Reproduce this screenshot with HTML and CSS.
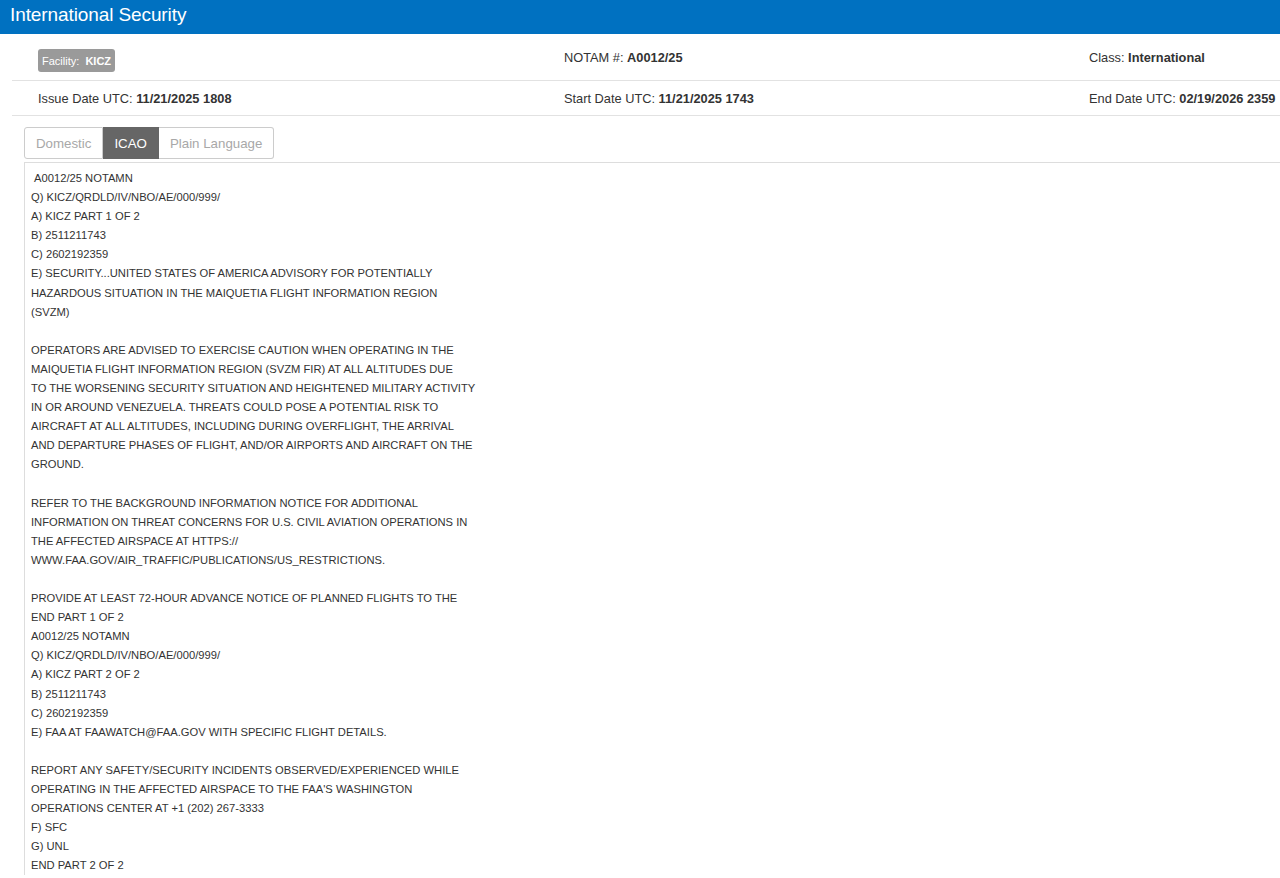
FILE: index.html
```html
<!DOCTYPE html>
<html>
<head>
<meta charset="utf-8">
<link rel="stylesheet" href="styles.css">
</head>
<body>
<header class="topbar"><h1 class="title">International Security</h1></header>
<section class="info">
  <div class="row row-first">
    <div class="cell"><span class="badge">Facility:&nbsp; <b>KICZ</b></span></div>
    <div class="cell">NOTAM #: <b>A0012/25</b></div>
    <div class="cell">Class: <b>International</b></div>
  </div>
  <div class="row row-second">
    <div class="cell">Issue Date UTC: <b>11/21/2025 1808</b></div>
    <div class="cell">Start Date UTC: <b>11/21/2025 1743</b></div>
    <div class="cell">End Date UTC: <b>02/19/2026 2359</b></div>
  </div>
</section>
<nav class="tabs">
  <span class="tab">Domestic</span><span class="tab active">ICAO</span><span class="tab">Plain Language</span>
</nav>
<div class="notam"><div class="line">&nbsp;A0012/25 NOTAMN</div>
<div class="line">Q) KICZ/QRDLD/IV/NBO/AE/000/999/</div>
<div class="line">A) KICZ PART 1 OF 2</div>
<div class="line">B) 2511211743</div>
<div class="line">C) 2602192359</div>
<div class="line">E) SECURITY...UNITED STATES OF AMERICA ADVISORY FOR POTENTIALLY</div>
<div class="line">HAZARDOUS SITUATION IN THE MAIQUETIA FLIGHT INFORMATION REGION</div>
<div class="line">(SVZM)</div>
<div class="line">&nbsp;</div>
<div class="line">OPERATORS ARE ADVISED TO EXERCISE CAUTION WHEN OPERATING IN THE</div>
<div class="line">MAIQUETIA FLIGHT INFORMATION REGION (SVZM FIR) AT ALL ALTITUDES DUE</div>
<div class="line">TO THE WORSENING SECURITY SITUATION AND HEIGHTENED MILITARY ACTIVITY</div>
<div class="line">IN OR AROUND VENEZUELA. THREATS COULD POSE A POTENTIAL RISK TO</div>
<div class="line">AIRCRAFT AT ALL ALTITUDES, INCLUDING DURING OVERFLIGHT, THE ARRIVAL</div>
<div class="line">AND DEPARTURE PHASES OF FLIGHT, AND/OR AIRPORTS AND AIRCRAFT ON THE</div>
<div class="line">GROUND.</div>
<div class="line">&nbsp;</div>
<div class="line">REFER TO THE BACKGROUND INFORMATION NOTICE FOR ADDITIONAL</div>
<div class="line">INFORMATION ON THREAT CONCERNS FOR U.S. CIVIL AVIATION OPERATIONS IN</div>
<div class="line">THE AFFECTED AIRSPACE AT HTTPS://</div>
<div class="line">WWW.FAA.GOV/AIR_TRAFFIC/PUBLICATIONS/US_RESTRICTIONS.</div>
<div class="line">&nbsp;</div>
<div class="line">PROVIDE AT LEAST 72-HOUR ADVANCE NOTICE OF PLANNED FLIGHTS TO THE</div>
<div class="line">END PART 1 OF 2</div>
<div class="line">A0012/25 NOTAMN</div>
<div class="line">Q) KICZ/QRDLD/IV/NBO/AE/000/999/</div>
<div class="line">A) KICZ PART 2 OF 2</div>
<div class="line">B) 2511211743</div>
<div class="line">C) 2602192359</div>
<div class="line">E) FAA AT FAAWATCH@FAA.GOV WITH SPECIFIC FLIGHT DETAILS.</div>
<div class="line">&nbsp;</div>
<div class="line">REPORT ANY SAFETY/SECURITY INCIDENTS OBSERVED/EXPERIENCED WHILE</div>
<div class="line">OPERATING IN THE AFFECTED AIRSPACE TO THE FAA'S WASHINGTON</div>
<div class="line">OPERATIONS CENTER AT +1 (202) 267-3333</div>
<div class="line">F) SFC</div>
<div class="line">G) UNL</div>
<div class="line">END PART 2 OF 2</div>
</div>
</body>
</html>
```
FILE: styles.css
```css
html, body {
  margin: 0;
  padding: 0;
  background: #fff;
  font-family: "Liberation Sans", Arial, sans-serif;
  color: #333;
  overflow: hidden;
}
.topbar {
  background: #0071c1;
  height: 34px;
  box-sizing: border-box;
  padding: 4px 0 0 10px;
}
.title {
  margin: 0;
  font-size: 19px;
  line-height: 22px;
  font-weight: normal;
  color: #fff;
  letter-spacing: -0.1px;
}
.info {
  margin-left: 12px;
}
.row {
  display: grid;
  grid-template-columns: 526px 525px 1fr;
  padding-left: 26px;
  border-bottom: 1px solid #e2e2e2;
  align-items: center;
  font-size: 12.8px;
  white-space: nowrap;
}
.row-first { height: 47px; padding-top: 1px; box-sizing: border-box; }
.row-second { height: 34px; }
.cell b { font-weight: bold; color: #333; }
.badge {
  display: inline-block;
  background: #9a9a9a;
  color: #fff;
  font-size: 11px;
  border-radius: 3px;
  padding: 6px 4px 5px 4px;
  line-height: 12px;
  margin-top: 6px;
}
.badge b { color: #fff; }
.tabs {
  display: flex;
  margin: 11px 0 0 24px;
}
.tab {
  border: 1px solid #ccc;
  border-left: none;
  padding: 0 11px;
  height: 30px;
  line-height: 31px;
  font-size: 13.3px;
  color: #a8a8a8;
}
.tab:first-child {
  border-left: 1px solid #ccc;
  border-radius: 3px 0 0 3px;
}
.tab:last-child { border-radius: 0 3px 3px 0; }
.tab.active {
  background: #666;
  color: #fff;
  border-color: #666;
}
.notam {
  margin: 3px 0 0 24px;
  border-top: 1px solid #ddd;
  border-left: 1px solid #ddd;
  padding: 6px 0 0 6px;
  font-size: 11.2px;
  line-height: 19.1px;
  color: #333;
}
.line { white-space: pre; }
```
